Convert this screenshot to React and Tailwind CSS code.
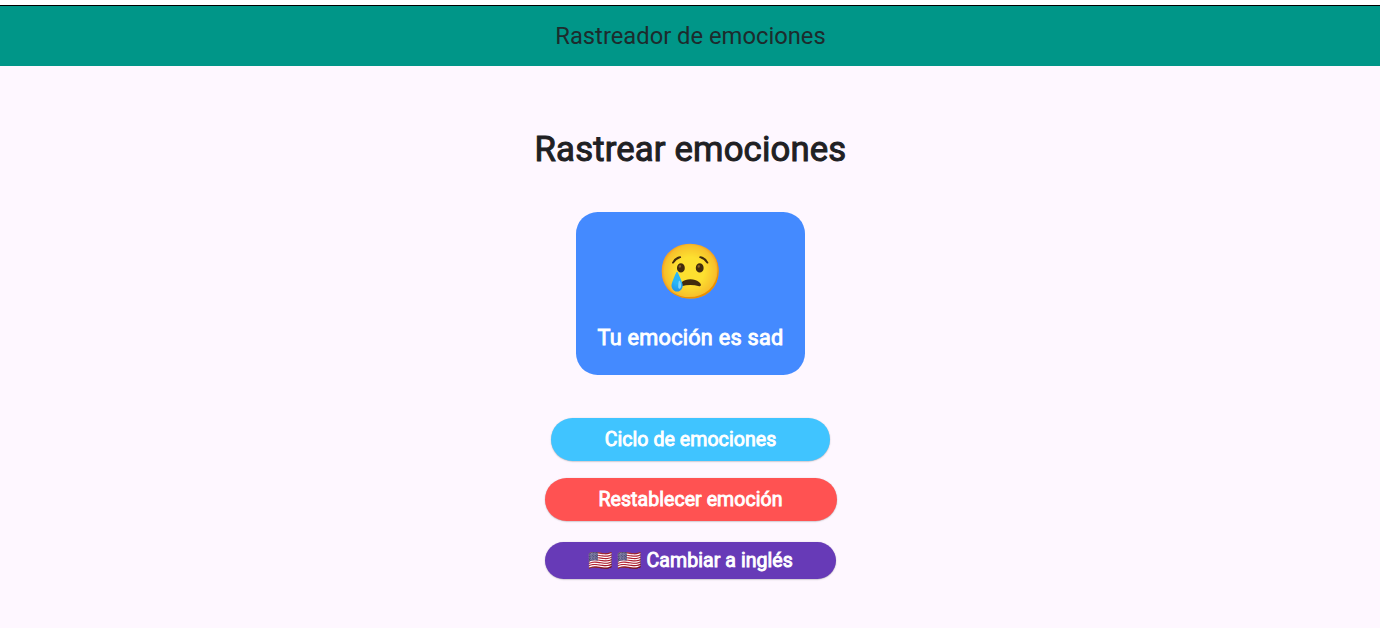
const FACE = "font-['Roboto','Noto_Color_Emoji',sans-serif]";
const BOLD = '[-webkit-text-stroke:0.9px_currentColor]';
const SHADOW = 'shadow-[0_0.5px_1.5px_rgba(0,0,0,0.3)]';

function PillButton({ className, children }) {
  return (
    <button
      className={`flex items-center justify-center rounded-full text-[19.5px] leading-6 tracking-[0.07px] whitespace-pre text-white ${BOLD} ${SHADOW} ${className}`}
    >
      {children}
    </button>
  );
}

export default function App() {
  return (
    <div className={`flex h-[628px] w-full flex-col overflow-hidden bg-[#fef7ff] ${FACE}`}>
      <div className="h-[6px] shrink-0 border-b border-black bg-white" />
      <header className="flex h-[60px] shrink-0 items-center justify-center bg-[#009688] pl-px">
        <h1 className="text-[23.75px] leading-7 text-[#1d2b2d]">Rastreador de emociones</h1>
      </header>
      <main className="flex flex-col items-center pt-[63px] pl-px">
        <h2 className="text-[34.7px] leading-[40px] tracking-[0.16px] text-[#202023] [-webkit-text-stroke:1px_currentColor]">
          Rastrear emociones
        </h2>
        <section className="mt-[43px] flex h-[163px] w-[228.5px] flex-col items-center rounded-[21.7px] bg-[#448aff] pt-[28px]">
          <span className="pl-px text-[53.6px] leading-[64px] text-black">😢</span>
          <p className={`mt-[21px] text-[21.67px] leading-[26px] tracking-[0.25px] text-white ${BOLD}`}>
            Tu emoción es sad
          </p>
        </section>
        <PillButton className="mt-[43.3px] h-[43.2px] w-[279.4px] bg-[#40c4ff]">Ciclo de emociones</PillButton>
        <PillButton className="mt-[16.2px] h-[43.2px] w-[292px] bg-[#ff5252] pt-px">Restablecer emoción</PillButton>
        <PillButton className="mt-[21.6px] h-[36.5px] w-[291.4px] bg-[#673ab7]">🇺🇸 🇺🇸 Cambiar a inglés</PillButton>
      </main>
    </div>
  );
}
